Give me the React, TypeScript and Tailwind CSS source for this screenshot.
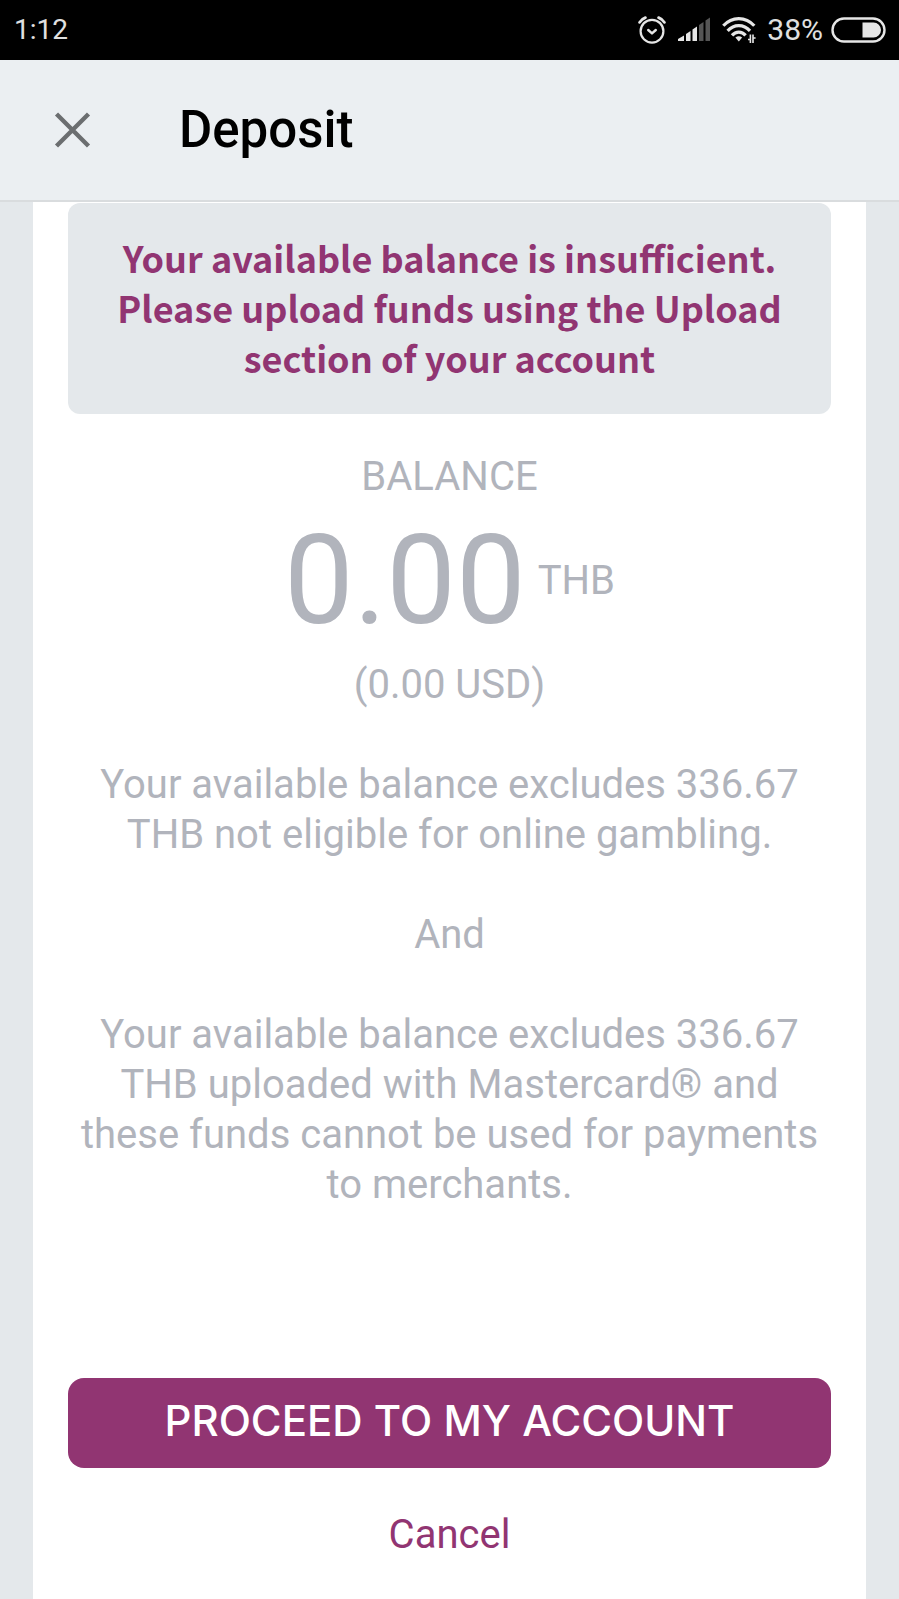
import React from "react";

function AlarmIcon() {
  return (
    <svg width="28" height="28" viewBox="0 0 28 28" fill="none" stroke="#e6e6e6" strokeWidth="2.2" strokeLinecap="round" strokeLinejoin="round" aria-hidden="true">
      <circle cx="14" cy="15.2" r="11.4" />
      <path d="M1.6 6.4Q3.4 3 7.4 1.6M26.4 6.4Q24.6 3 20.6 1.6" strokeWidth="2.8" />
      <path d="M10.2 14L14 17.4L17.8 14" strokeWidth="2.4" />
    </svg>
  );
}

function SignalIcon() {
  return (
    <svg width="34" height="26" viewBox="0 0 34 26" aria-hidden="true">
      <path d="M1 24V22L7 18.5V24Z" fill="#e6e6e6" />
      <path d="M9 24V17L13.5 14V24Z" fill="#e6e6e6" />
      <path d="M15.5 24V12.5L20 9.5V24Z" fill="#e6e6e6" />
      <path d="M22 24V8L26.5 5V24Z" fill="#555" />
      <path d="M28.5 24V3.5L33 0.5V24Z" fill="#555" />
    </svg>
  );
}

function WifiIcon() {
  return (
    <svg width="34" height="28" viewBox="0 0 34 28" fill="none" stroke="#e6e6e6" strokeWidth="3.2" aria-hidden="true">
      <path d="M1.3 9.8C10 0.2 23.6 0.2 32.3 9.8" />
      <path d="M5.6 14.8C12 7.8 21.6 7.8 28 14.8" />
      <path d="M10 19.4C13.8 15 19.8 15 23.6 19.4" />
      <path d="M13.4 21.6Q16.8 18.8 20.2 21.6L16.8 25.4Z" fill="#e6e6e6" stroke="none" />
      <path d="M28.4 18.5V27M31 18.5V27M26 23.5H28.4M31 22H33.6" strokeWidth="1.6" />
    </svg>
  );
}

function BatteryIcon() {
  return (
    <svg width="55" height="26" viewBox="0 0 55 26" fill="none" aria-hidden="true">
      <rect x="1.5" y="1.5" width="52" height="23" rx="11.5" stroke="#e6e6e6" strokeWidth="2.4" />
      <path d="M31.5 5.5H42.5A7.5 7.5 0 0 1 42.5 20.5H31.5Z" fill="#e6e6e6" />
    </svg>
  );
}

export default function App() {
  return (
    <div className="flex min-h-screen flex-col bg-[#e4e8eb] font-['Roboto',sans-serif] text-[40px] leading-[50px] text-[#b1b4bc]">
      <div className="flex h-[60px] items-center justify-between bg-black pr-[13px] pl-[14px] text-[#e0e0e0]">
        <time className="text-[28px]">1:12</time>
        <div className="flex items-center gap-[11px]">
          <AlarmIcon />
          <SignalIcon />
          <WifiIcon />
          <div className="flex items-center gap-2">
            <span className="text-[30px]">38%</span>
            <BatteryIcon />
          </div>
        </div>
      </div>

      <header className="flex h-[142px] items-center border-b-2 border-[#d9dcde] bg-[#ebeff2] pl-[54px]">
        <button type="button" aria-label="Close" className="flex">
          <svg width="37" height="37" viewBox="0 0 37 37" stroke="#6b6e70" strokeWidth="4.4" aria-hidden="true">
            <path d="M2.5 2L34.5 34M34.5 2L2.5 34" />
          </svg>
        </button>
        <h1 className="ml-[88px] text-[51px] font-medium text-black">Deposit</h1>
      </header>

      <main className="mx-[33px] flex flex-1 flex-col bg-white px-[35px] pt-px pb-[39px] text-center">
        <p role="alert" className="rounded-xl bg-[#e4e8eb] px-10 pt-[29px] pb-8 font-['Noto_Sans_CJK_SC',sans-serif] text-[36px] font-bold text-[#913572]">
          Your available balance is insufficient. Please upload funds using the Upload section of your account
        </p>

        <h2 className="mt-[38px]">BALANCE</h2>
        <div className="flex items-center justify-center gap-3 leading-[158px]">
          <span className="text-[124px]">0.00</span>
          <span className="leading-[50px]">THB</span>
        </div>
        <p>(0.00 USD)</p>

        <div className="mt-[50px] flex flex-col gap-[50px]">
          <p className="px-6">Your available balance excludes 336.67 THB not eligible for online gambling.</p>
          <p>And</p>
          <p>Your available balance excludes 336.67 THB uploaded with Mastercard® and these funds cannot be used for payments to merchants.</p>
        </div>

        <button type="button" className="mt-auto h-[90px] rounded-2xl bg-[#913572] pb-1 font-['Inter',sans-serif] text-[42px] font-medium text-white">
          PROCEED TO MY ACCOUNT
        </button>
        <button type="button" className="mt-[42px] self-center text-[#913572]">Cancel</button>
      </main>
    </div>
  );
}
